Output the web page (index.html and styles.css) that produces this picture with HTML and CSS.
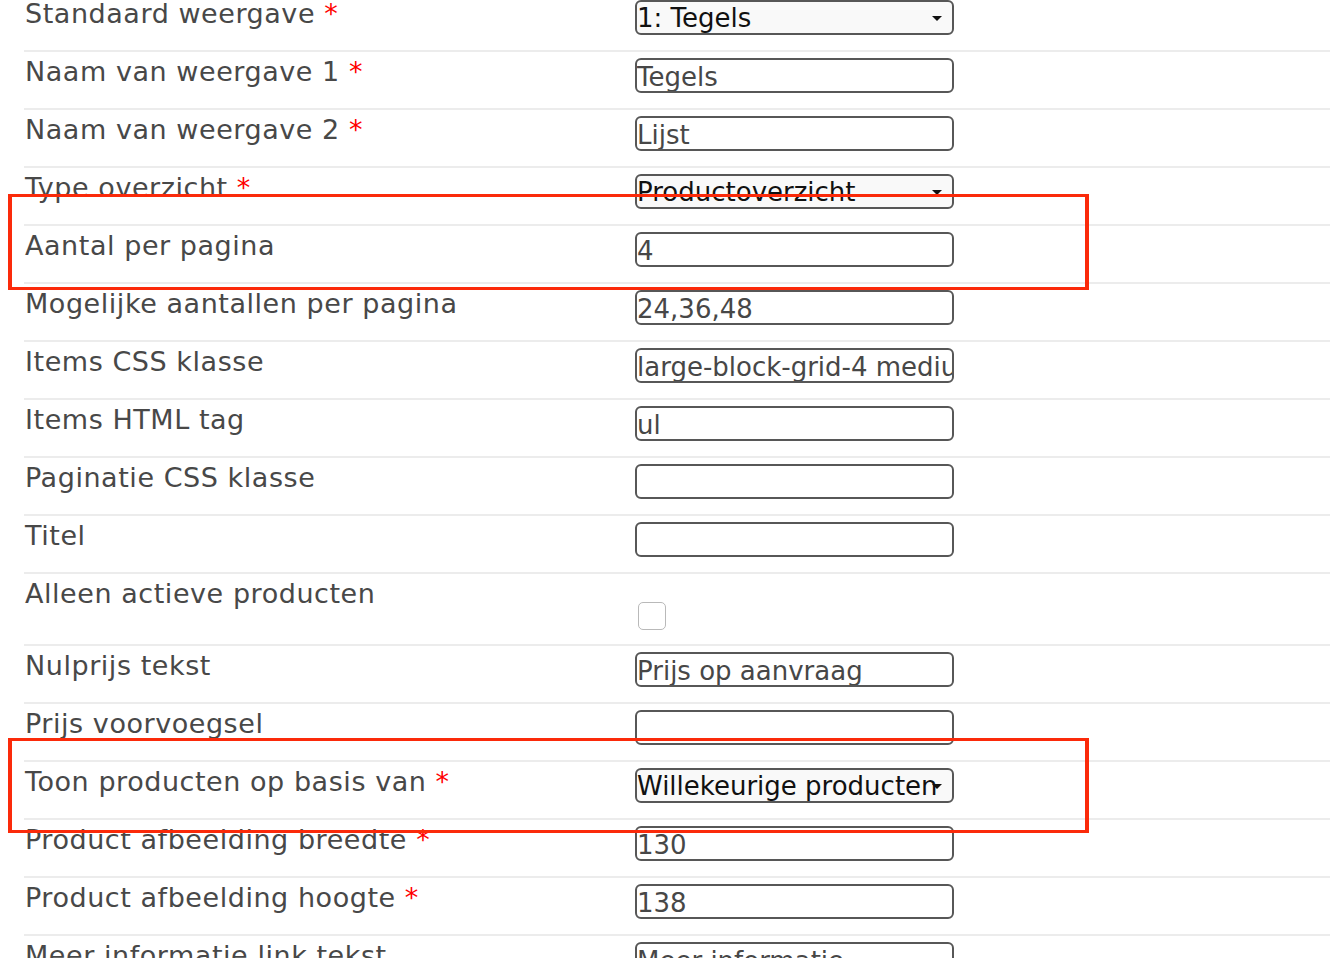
FILE: index.html
```html
<!DOCTYPE html>
<html lang="nl">
<head>
<meta charset="utf-8">
<title>Instellingen</title>
<link rel="stylesheet" href="styles.css">
</head>
<body>
<div class="form">
  <div class="row">
    <label class="lbl">Standaard weergave <span class="req">*</span></label>
    <div class="field"><div class="sel"><select class="ctrl select"><option>1: Tegels</option></select></div></div>
  </div>
  <div class="row">
    <label class="lbl">Naam van weergave 1 <span class="req">*</span></label>
    <div class="field"><input class="ctrl" type="text" value="Tegels"></div>
  </div>
  <div class="row">
    <label class="lbl">Naam van weergave 2 <span class="req">*</span></label>
    <div class="field"><input class="ctrl" type="text" value="Lijst"></div>
  </div>
  <div class="row">
    <label class="lbl">Type overzicht <span class="req">*</span></label>
    <div class="field"><div class="sel"><select class="ctrl select"><option>Productoverzicht</option></select></div></div>
  </div>
  <div class="row">
    <label class="lbl">Aantal per pagina</label>
    <div class="field"><input class="ctrl" type="text" value="4"></div>
  </div>
  <div class="row">
    <label class="lbl">Mogelijke aantallen per pagina</label>
    <div class="field"><input class="ctrl" type="text" value="24,36,48"></div>
  </div>
  <div class="row">
    <label class="lbl">Items CSS klasse</label>
    <div class="field"><input class="ctrl" type="text" value="large-block-grid-4 medium-block-grid-3 small-block-grid-2"></div>
  </div>
  <div class="row">
    <label class="lbl">Items HTML tag</label>
    <div class="field"><input class="ctrl" type="text" value="ul"></div>
  </div>
  <div class="row">
    <label class="lbl">Paginatie CSS klasse</label>
    <div class="field"><input class="ctrl" type="text" value=""></div>
  </div>
  <div class="row">
    <label class="lbl">Titel</label>
    <div class="field"><input class="ctrl" type="text" value=""></div>
  </div>
  <div class="row row-check">
    <label class="lbl">Alleen actieve producten</label>
    <div class="field"><input class="check" type="checkbox"></div>
  </div>
  <div class="row">
    <label class="lbl">Nulprijs tekst</label>
    <div class="field"><input class="ctrl" type="text" value="Prijs op aanvraag"></div>
  </div>
  <div class="row">
    <label class="lbl">Prijs voorvoegsel</label>
    <div class="field"><input class="ctrl" type="text" value=""></div>
  </div>
  <div class="row">
    <label class="lbl">Toon producten op basis van <span class="req">*</span></label>
    <div class="field"><div class="sel"><select class="ctrl select"><option>Willekeurige producten</option></select></div></div>
  </div>
  <div class="row">
    <label class="lbl">Product afbeelding breedte <span class="req">*</span></label>
    <div class="field"><input class="ctrl" type="text" value="130"></div>
  </div>
  <div class="row">
    <label class="lbl">Product afbeelding hoogte <span class="req">*</span></label>
    <div class="field"><input class="ctrl" type="text" value="138"></div>
  </div>
  <div class="row">
    <label class="lbl">Meer informatie link tekst</label>
    <div class="field"><input class="ctrl" type="text" value="Meer informatie"></div>
  </div>
</div>
<div class="mark mark-1"></div>
<div class="mark mark-2"></div>
</body>
</html>
```

FILE: styles.css
```css
html, body {
  margin: 0;
  padding: 0;
  background: #fff;
  overflow: hidden;
}
body {
  position: relative;
  height: 958px;
  font-family: "DejaVu Sans", Verdana, sans-serif;
}
.form {
  margin-top: -8px;
  margin-left: 24px;
}
.row {
  display: flex;
  border-top: 2px solid #ececec;
  min-height: 58px;
  box-sizing: border-box;
}
.row-check {
  min-height: 72px;
}
.lbl {
  width: 610px;
  padding-left: 1px;
  padding-top: 5px;
  font-size: 27px;
  line-height: 30px;
  color: #484848;
  letter-spacing: 0.55px;
}
.req {
  color: #f00;
}
.field {
  width: 319px;
  padding-top: 6px;
}
.sel {
  position: relative;
  width: 319px;
}
.sel::after {
  content: "";
  position: absolute;
  right: 12px;
  top: 16px;
  border-left: 5px solid transparent;
  border-right: 5px solid transparent;
  border-top: 5px solid #111;
  pointer-events: none;
}
.ctrl {
  display: block;
  width: 319px;
  height: 35px;
  box-sizing: border-box;
  margin: 0;
  padding: 2px 0 0 0;
  border: 2px solid #575757;
  border-radius: 6px;
  background: #fff;
  font-family: "DejaVu Sans", Verdana, sans-serif;
  font-size: 26px;
  line-height: 29px;
  color: #474747;
  outline: none;
}
.select {
  appearance: none;
  -webkit-appearance: none;
  background: #f9f9f9;
  color: #111;
}
.check {
  appearance: none;
  -webkit-appearance: none;
  display: block;
  margin: 22px 0 0 3px;
  width: 28px;
  height: 28px;
  box-sizing: border-box;
  border: 1px solid #b9b9b9;
  border-radius: 5px;
  background: #fff;
}
.mark {
  position: absolute;
  left: 8px;
  width: 1081px;
  box-sizing: border-box;
  border: 3px solid #fb2a0a;
  border-left-width: 4px;
  border-right-width: 4px;
}
.mark-1 {
  top: 194px;
  height: 96px;
}
.mark-2 {
  top: 738px;
  height: 95px;
}
```
